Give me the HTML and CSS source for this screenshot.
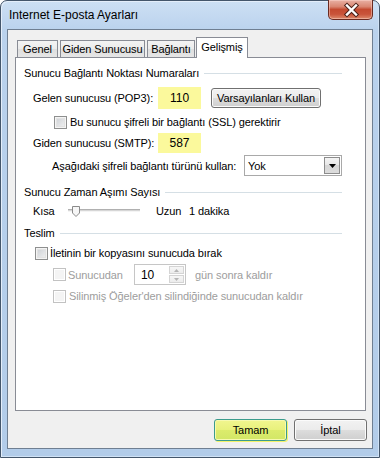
FILE: index.html
```html
<!DOCTYPE html>
<html lang="tr">
<head>
    <meta charset="UTF-8">
    <title>Internet E-posta Ayarları</title>
    <link rel="stylesheet" href="styles.css">
</head>
<body>
<div class="window">
    <div class="titlebar">
        <span class="title">Internet E-posta Ayarları</span>
        <div class="close">
            <svg width="45" height="20" viewBox="0 0 45 20">
                <path d="M19 5.5 L28 14.5 M28 5.5 L19 14.5" stroke="#4a2018" stroke-width="4.4" stroke-linecap="square"/>
                <path d="M19 5.5 L28 14.5 M28 5.5 L19 14.5" stroke="#fff" stroke-width="2.4" stroke-linecap="square"/>
            </svg>
        </div>
    </div>

    <div class="client">
        <div class="tabs">
            <div class="tab">Genel</div>
            <div class="tab">Giden Sunucusu</div>
            <div class="tab">Bağlantı</div>
            <div class="tab active">Gelişmiş</div>
        </div>

        <div class="panel">
            <div class="group"><span>Sunucu Bağlantı Noktası Numaraları</span></div>

            <div class="row r-pop">
                <span class="label">Gelen sunucusu (POP3):</span>
                <span class="port">110</span>
                <button class="btn btn-defaults">Varsayılanları Kullan</button>
            </div>
            <div class="row r-ssl">
                <span class="chk"></span>
                <span class="chk-text">Bu sunucu şifreli bir bağlantı (SSL) gerektirir</span>
            </div>
            <div class="row r-smtp">
                <span class="label">Giden sunucusu (SMTP):</span>
                <span class="port">587</span>
            </div>
            <div class="row r-enc">
                <span class="label-wide">Aşağıdaki şifreli bağlantı türünü kullan:</span>
                <div class="select">
                    <span>Yok</span>
                    <span class="select-btn">
                        <svg width="7" height="4" viewBox="0 0 7 4"><path d="M0 0 H7 L3.5 4 Z" fill="#000"/></svg>
                    </span>
                </div>
            </div>

            <div class="group g2"><span>Sunucu Zaman Aşımı Sayısı</span></div>
            <div class="row r-slider">
                <span class="kisa">Kısa</span>
                <svg class="slider" width="72" height="12" viewBox="0 0 72 12">
                    <rect x="0" y="3" width="72" height="2" fill="#d6d6d6"/>
                    <rect x="0" y="3" width="72" height="1" fill="#b0b0b0"/>
                    <rect x="0" y="5" width="72" height="1" fill="#f4f4f4"/>
                    <path d="M4.5 0.5 H11.5 V7 L8 10.5 L4.5 7 Z" fill="#f6f6f6" stroke="#8a8a8a"/>
                </svg>
                <span class="uzun">Uzun</span>
                <span>1 dakika</span>
            </div>

            <div class="group g3"><span>Teslim</span></div>
            <div class="row r-keep">
                <span class="chk"></span>
                <span class="chk-text">İletinin bir kopyasını sunucuda bırak</span>
            </div>
            <div class="row r-days disabled">
                <span class="chk off"></span>
                <span class="days-label">Sunucudan</span>
                <div class="spin">
                    <span>10</span>
                    <span class="spin-btns">
                        <span class="spin-btn"><svg width="5" height="3" viewBox="0 0 5 3"><path d="M0 3 L2.5 0 L5 3 Z" fill="#b5b5b5"/></svg></span>
                        <span class="spin-btn"><svg width="5" height="3" viewBox="0 0 5 3"><path d="M0 0 L2.5 3 L5 0 Z" fill="#b5b5b5"/></svg></span>
                    </span>
                </div>
                <span>gün sonra kaldır</span>
            </div>
            <div class="row r-del disabled">
                <span class="chk off"></span>
                <span class="chk-text">Silinmiş Öğeler'den silindiğinde sunucudan kaldır</span>
            </div>
        </div>

        <div class="buttons">
            <button class="btn btn-ok">Tamam</button>
            <button class="btn">İptal</button>
        </div>
    </div>
</div>
</body>
</html>
```

FILE: styles.css
```css
* {
    box-sizing: border-box;
}

body {
    margin: 0;
    background: #fff;
    font-family: "Liberation Sans", Arial, sans-serif;
    font-size: 11px;
    letter-spacing: -0.1px;
    color: #000;
    white-space: nowrap;
}

/* window frame */
.window {
    width: 380px;
    height: 458px;
    border: 1px solid #44566b;
    border-radius: 7px 7px 0 0;
    background: linear-gradient(#cde0f4, #bad2ed 30px, #b2cce9);
    box-shadow: inset 1px 1px 0 #e4eefa, inset -1px -1px 0 #d0e2f5;
    display: flex;
    flex-direction: column;
}

.titlebar {
    height: 28px;
    display: flex;
    align-items: flex-start;
    padding-left: 8px;
}

.title {
    line-height: 28px;
    font-size: 12px;
    letter-spacing: 0;
    color: #000;
}

.close {
    margin-left: auto;
    margin-right: 6px;
    margin-top: -1px;
    width: 45px;
    height: 20px;
    border: 1px solid #6a2a20;
    border-top: none;
    border-radius: 0 0 5px 5px;
    background: linear-gradient(#e9b1a4, #d98671 35%, #c44a30 50%, #c9543a 75%, #dc8a6c);
    box-shadow: inset 0 0 0 1px rgba(255, 220, 210, 0.45);
}

.close svg {
    display: block;
    margin-left: -1px;
}

.client {
    margin: 0 6px;
    height: 420px;
    border: 1px solid #6f7f92;
    background: #f0f0f0;
    padding-top: 7px;
    display: flex;
    flex-direction: column;
}

/* tabs */
.tabs {
    height: 20px;
    display: flex;
    align-items: flex-end;
    padding-left: 9px;
    position: relative;
    z-index: 1;
}

.tab {
    height: 17px;
    border: 1px solid #898c95;
    border-bottom: none;
    background: linear-gradient(#f3f3f3, #ebebeb 50%, #dedede 50%, #e6e6e6);
    text-align: center;
    line-height: 17px;
    margin-right: 2px;
}

.tab:nth-child(1) { width: 41px; }
.tab:nth-child(2) { width: 85px; }
.tab:nth-child(3) { width: 48px; margin-right: 1px; }

.tab.active {
    width: 52px;
    height: 21px;
    margin-bottom: -1px;
    background: #fff;
    line-height: 18px;
}

.panel {
    margin: 0 6px 0 7px;
    height: 354px;
    border: 1px solid #898c95;
    background: #fff;
    padding: 7px 23px 0 8px;
}

/* group headers */
.group {
    height: 16px;
    display: flex;
    align-items: center;
}

.group::after {
    content: "";
    flex: 1;
    margin-left: 5px;
    border-top: 1px solid #d5dfe5;
}

.g2 { margin-top: 8px; }
.g3 { margin-top: 5px; }

.row {
    display: flex;
    align-items: center;
}

.label {
    width: 125px;
}

.port {
    width: 43px;
    height: 20px;
    background: #fbf99c;
    text-align: center;
    line-height: 20px;
    font-size: 12px;
    letter-spacing: 0;
}

.r-pop {
    margin-top: 6px;
    height: 22px;
    padding-left: 9px;
}

.r-pop .port {
    height: 22px;
    line-height: 22px;
}

.r-ssl {
    margin-top: 6px;
    height: 14px;
    padding-left: 30px;
}

.r-smtp {
    margin-top: 4px;
    height: 20px;
    padding-left: 9px;
}

.r-enc {
    margin-top: 2px;
    height: 21px;
    padding-left: 28px;
}

.label-wide {
    width: 192px;
}

.select {
    width: 98px;
    height: 21px;
    border: 1px solid #a9a9a9;
    background: #fff;
    display: flex;
    align-items: center;
    padding-left: 3px;
}

.select-btn {
    margin-left: auto;
    margin-right: 1px;
    width: 16px;
    height: 17px;
    border: 1px solid #8c8c8c;
    background: linear-gradient(#f4f4f4, #e6e6e6 50%, #d6d6d6 50%, #dcdcdc);
    display: flex;
    align-items: center;
    justify-content: center;
}

.select-btn svg {
    display: block;
}

/* slider */
.r-slider {
    margin-top: 2px;
    height: 18px;
    padding-left: 9px;
}

.kisa {
    width: 35px;
}

.slider {
    display: block;
    margin-top: 1px;
}

.uzun {
    margin-left: 16px;
    width: 33px;
}

/* checkboxes */
.chk {
    width: 13px;
    height: 13px;
    border: 1px solid #8e8f8f;
    background: linear-gradient(135deg, #c9cdd2, #f4f4f4);
    box-shadow: inset 0 0 0 1px #f4f4f4, inset 0 0 0 2px #e2e2e2;
    flex-shrink: 0;
}

.chk.off {
    border-color: #c2c2c2;
    background: #f4f4f4;
    box-shadow: inset 0 0 0 1px #fff;
}

.chk-text {
    margin-left: 3px;
}

.r-keep {
    margin-top: 5px;
    height: 14px;
    padding-left: 11px;
}

.r-keep .chk-text {
    margin-left: 2px;
}

.disabled {
    color: #9d9d9d;
}

.r-days {
    margin-top: 4px;
    height: 21px;
    padding-left: 29px;
}

.days-label {
    margin-left: 2px;
    width: 66px;
}

.spin {
    width: 52px;
    height: 21px;
    border: 1px solid #c6c6c6;
    background: #fff;
    display: flex;
    align-items: center;
    padding-left: 6px;
    margin-right: 9px;
    color: #000;
    font-size: 12px;
}

.spin-btns {
    margin-left: auto;
    margin-right: 1px;
    display: flex;
    flex-direction: column;
    gap: 1px;
}

.spin-btn {
    width: 15px;
    height: 8px;
    border: 1px solid #d4d4d4;
    background: linear-gradient(#f6f6f6, #ececec);
    display: flex;
    align-items: center;
    justify-content: center;
}

.spin-btn svg {
    display: block;
}

.r-del {
    margin-top: 4px;
    height: 14px;
    padding-left: 29px;
}

/* buttons */
.btn {
    font-family: "Liberation Sans", Arial, sans-serif;
    font-size: 11px;
    letter-spacing: -0.1px;
    color: #000;
    height: 22px;
    border: 1px solid #707070;
    border-radius: 3px;
    background: linear-gradient(#f2f2f2, #ebebeb 50%, #dddddd 50%, #cfcfcf);
    box-shadow: inset 0 0 0 1px #fbfbfb;
    padding: 0;
}

.btn-defaults {
    margin-left: 10px;
    width: 110px;
    height: 20px;
}

.buttons {
    margin-top: 8px;
    display: flex;
    justify-content: flex-end;
    gap: 7px;
    padding-right: 5px;
}

.buttons .btn {
    width: 73px;
}

.btn-ok {
    border-color: #3b9b8c;
    background: linear-gradient(#f1f68f, #e8f17c 50%, #dcec6c 50%, #d2e766);
    box-shadow: inset 0 0 0 1px #f7fab0, 1px 1px 0 #f3f36a;
}
```
